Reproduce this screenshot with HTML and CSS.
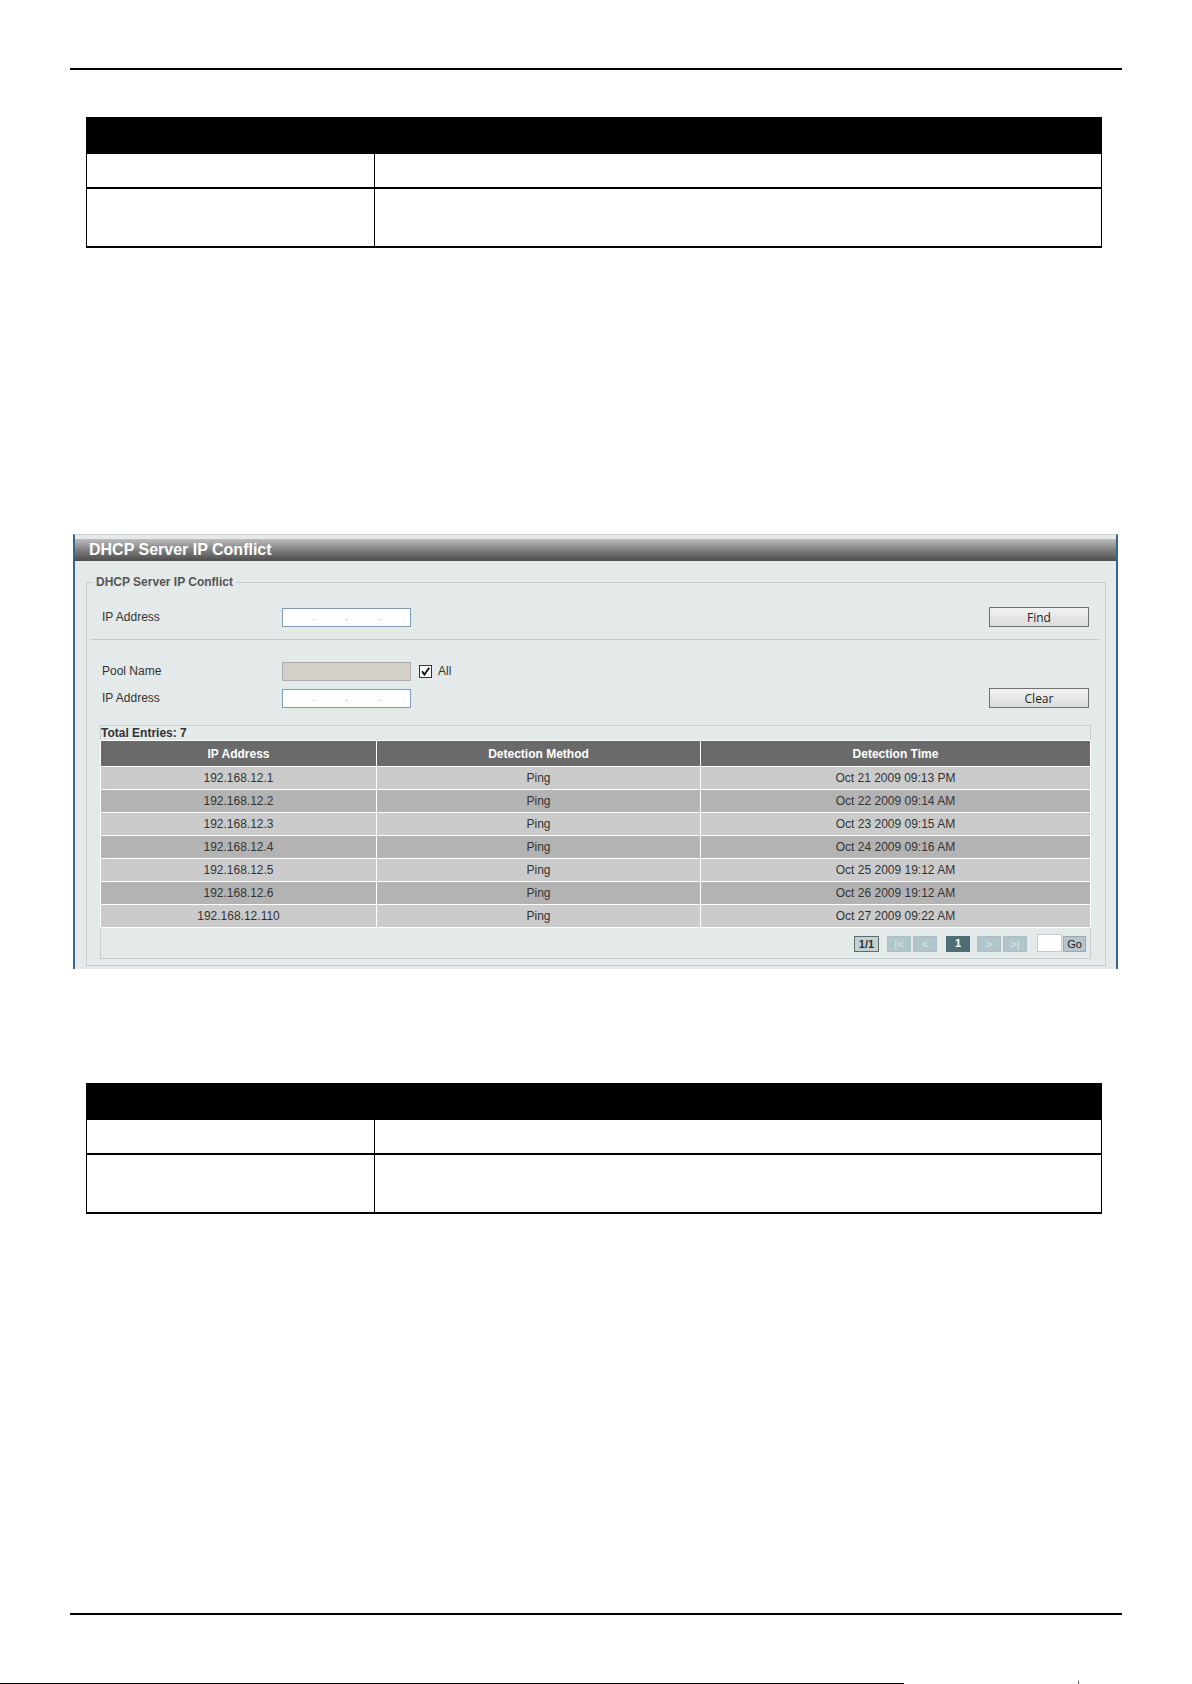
FILE: index.html
```html
<!DOCTYPE html>
<html lang="en">
<head>
    <meta charset="UTF-8">
    <meta name="viewport" content="width=device-width, initial-scale=1.0">
    <title>DHCP Server IP Conflict</title>
    <link rel="stylesheet" href="styles.css">
</head>
<body>
    <div class="page">
        <div class="rule"></div>

        <!-- parameter table (top) -->
        <div class="param-table">
            <div class="param-head"></div>
            <div class="param-key"></div>
            <div class="param-desc"></div>
            <div class="param-key tall"></div>
            <div class="param-desc tall"></div>
        </div>

        <div class="panel">
            <div class="panel-title">DHCP Server IP Conflict</div>
            <fieldset class="group">
                <legend>DHCP Server IP Conflict</legend>

                <div class="form-row row-find">
                    <span class="label">IP Address</span>
                    <div class="ip-box"><span></span><i>.</i><span></span><i>.</i><span></span><i>.</i><span></span></div>
                    <button class="btn">Find</button>
                </div>

                <div class="divider"></div>

                <div class="form-row row-pool">
                    <span class="label">Pool Name</span>
                    <div class="text-box disabled"></div>
                    <span class="check">
                        <svg width="13" height="13" viewBox="0 0 13 13">
                            <rect x="0.5" y="0.5" width="12" height="12" fill="#fff" stroke="#333"/>
                            <path d="M3 6.2 L5.4 9.6 L10.2 2.8" fill="none" stroke="#111" stroke-width="1.8"/>
                        </svg>
                        All
                    </span>
                </div>

                <div class="form-row row-clear">
                    <span class="label">IP Address</span>
                    <div class="ip-box"><span></span><i>.</i><span></span><i>.</i><span></span><i>.</i><span></span></div>
                    <button class="btn">Clear</button>
                </div>

                <div class="entries">
                    <div class="entries-total">Total Entries: 7</div>
                    <table class="grid">
                        <thead>
                            <tr><th class="col-ip">IP Address</th><th class="col-method">Detection Method</th><th>Detection Time</th></tr>
                        </thead>
                        <tbody>
                            <tr><td>192.168.12.1</td><td>Ping</td><td>Oct 21 2009 09:13 PM</td></tr>
                            <tr><td>192.168.12.2</td><td>Ping</td><td>Oct 22 2009 09:14 AM</td></tr>
                            <tr><td>192.168.12.3</td><td>Ping</td><td>Oct 23 2009 09:15 AM</td></tr>
                            <tr><td>192.168.12.4</td><td>Ping</td><td>Oct 24 2009 09:16 AM</td></tr>
                            <tr><td>192.168.12.5</td><td>Ping</td><td>Oct 25 2009 19:12 AM</td></tr>
                            <tr><td>192.168.12.6</td><td>Ping</td><td>Oct 26 2009 19:12 AM</td></tr>
                            <tr><td>192.168.12.110</td><td>Ping</td><td>Oct 27 2009 09:22 AM</td></tr>
                        </tbody>
                    </table>
                    <div class="pager">
                        <span class="pg-count">1/1</span>
                        <span class="pg-nav first">|&lt;</span>
                        <span class="pg-nav prev">&lt;</span>
                        <span class="pg-current">1</span>
                        <span class="pg-nav next">&gt;</span>
                        <span class="pg-nav last">&gt;|</span>
                        <span class="pg-input"></span>
                        <span class="pg-go">Go</span>
                    </div>
                </div>
            </fieldset>
        </div>

        <!-- parameter table (bottom) -->
        <div class="param-table lower">
            <div class="param-head"></div>
            <div class="param-key"></div>
            <div class="param-desc"></div>
            <div class="param-key tall"></div>
            <div class="param-desc tall"></div>
        </div>

        <div class="rule footer-rule"></div>

        <div class="page-edge">
            <div class="edge-line"></div>
            <div class="edge-tick"></div>
        </div>
    </div>
</body>
</html>
```

FILE: styles.css
```css
body {
    margin: 0;
    padding: 0;
    background: #fff;
    font-family: "Liberation Sans", Arial, sans-serif;
    font-size: 12px;
    color: #333;
}

.page {
    height: 1684px;
    display: flex;
    flex-direction: column;
    overflow: hidden;
}

/* page header / footer lines */
.rule {
    margin: 68px 70px 0 70px;
    border-top: 2px solid #000;
}

.footer-rule {
    margin-top: 399px;
}

.page-edge {
    margin-top: 66px;
    height: 3px;
    display: flex;
    align-items: flex-end;
}

.edge-line {
    width: 904px;
    border-top: 1px solid #000;
}

.edge-tick {
    margin-left: 174px;
    width: 1px;
    height: 3px;
    background: #666;
}

/* empty parameter tables */
.param-table {
    display: grid;
    grid-template-columns: 289px 727px;
    margin: 47px 0 0 86px;
}

.param-table.lower {
    margin-top: 114px;
}

.param-head {
    grid-column: span 2;
    height: 37px;
    background: #000;
}

.param-key,
.param-desc {
    box-sizing: border-box;
    height: 35px;
    border-bottom: 2px solid #000;
    border-right: 1px solid #000;
}

.param-key {
    border-left: 1px solid #000;
}

.param-key.tall,
.param-desc.tall {
    height: 59px;
}

/* web UI panel */
.panel {
    margin: 286px 0 0 73px;
    width: 1045px;
    box-sizing: border-box;
    background: #e4eaea;
    border-top: 1px solid #c9d0d0;
    border-left: 2px solid #3a6590;
    border-right: 2px solid #3a6590;
    padding-top: 4px;
}

.panel-title {
    height: 22px;
    line-height: 22px;
    padding-left: 14px;
    background: linear-gradient(#bdbdbd, #7a7a7a 55%, #4c4c4c);
    color: #fff;
    font-size: 16px;
    font-weight: bold;
}

.group {
    margin: 14px 10px 3px 11px;
    padding: 0 4px 6px 4px;
    border: 1px solid #c5cdcd;
    min-width: 0;
}

.group legend {
    margin-left: 2px;
    padding: 0 3px;
    font-size: 12px;
    line-height: 14px;
    font-weight: bold;
    color: #555;
}

.form-row {
    display: flex;
    align-items: center;
    height: 20px;
    padding: 0 12px 0 11px;
}

.row-find {
    margin-top: 18px;
}

.row-pool {
    margin-top: 21px;
}

.row-clear {
    margin-top: 7px;
}

.label {
    width: 180px;
    color: #333;
}

.divider {
    margin: 12px 1px 0 0;
    border-top: 1px solid #c3cbcb;
}

.ip-box,
.text-box {
    box-sizing: border-box;
    width: 129px;
    height: 19px;
    border: 1px solid #7f9db9;
    background: #fff;
}

.ip-box {
    display: flex;
    align-items: center;
}

.ip-box span {
    width: 29px;
}

.ip-box i {
    width: 4px;
    font-style: normal;
    font-size: 9px;
    color: #999;
    text-align: center;
}

.text-box.disabled {
    background: #d4d0c8;
    border-color: #a7aeb4;
}

.check {
    display: flex;
    align-items: center;
    gap: 6px;
    margin-left: 8px;
}

.btn {
    margin-left: auto;
    box-sizing: border-box;
    width: 100px;
    height: 20px;
    padding: 0;
    border: 1px solid #707070;
    background: linear-gradient(#f2f2f2, #dcdcdc);
    font-family: "Open Sans", sans-serif;
    font-size: 12px;
    color: #222;
}

/* entries list */
.entries {
    margin: 17px 10px 0 9px;
    border: 1px solid #c6cece;
    padding-bottom: 6px;
}

.entries-total {
    line-height: 14px;
    font-weight: bold;
    color: #333;
}

.grid {
    width: calc(100% + 2px);
    margin: 0 -1px;
    border-collapse: collapse;
    table-layout: fixed;
}

.grid th,
.grid td {
    border: 1px solid #fff;
    padding: 0;
    text-align: center;
}

.grid th {
    height: 25px;
    background: #6a6a6a;
    color: #fff;
    font-weight: bold;
}

.grid .col-ip {
    width: 275px;
}

.grid .col-method {
    width: 323px;
}

.grid td {
    height: 22px;
    background: #cbcbcb;
    color: #333;
}

.grid tbody tr:nth-child(even) td {
    background: #b3b3b3;
}

.pager {
    display: flex;
    justify-content: flex-end;
    align-items: flex-end;
    height: 18px;
    margin-top: 6px;
    padding-right: 4px;
}

.pager span {
    box-sizing: border-box;
    height: 16px;
    line-height: 14px;
    text-align: center;
}

.pg-count {
    width: 25px;
    border: 1px solid #5b6b6b;
    background: #c5d1d1;
    font-size: 11px;
    font-weight: bold;
    margin-right: 8px;
}

.pg-nav {
    width: 24px;
    background: #b1c6ca;
    border: 1px solid #a9bfc3;
    color: #dbe6e8;
    font-size: 11px;
}

.pg-nav.first,
.pg-nav.next {
    margin-right: 2px;
}

.pg-nav.prev {
    margin-right: 9px;
}

.pg-nav.last {
    margin-right: 10px;
}

.pg-current {
    width: 24px;
    margin-right: 7px;
    background: #4e6d75;
    color: #fff;
    font-weight: bold;
    font-size: 11px;
}

.pager .pg-input {
    width: 25px;
    height: 18px;
    background: #fff;
    border: 1px solid #c3cdcd;
    margin-right: 1px;
}

.pg-go {
    width: 23px;
    background: #b6c6ca;
    border: 1px solid #97aaae;
    font-size: 11px;
    color: #222;
}
```
